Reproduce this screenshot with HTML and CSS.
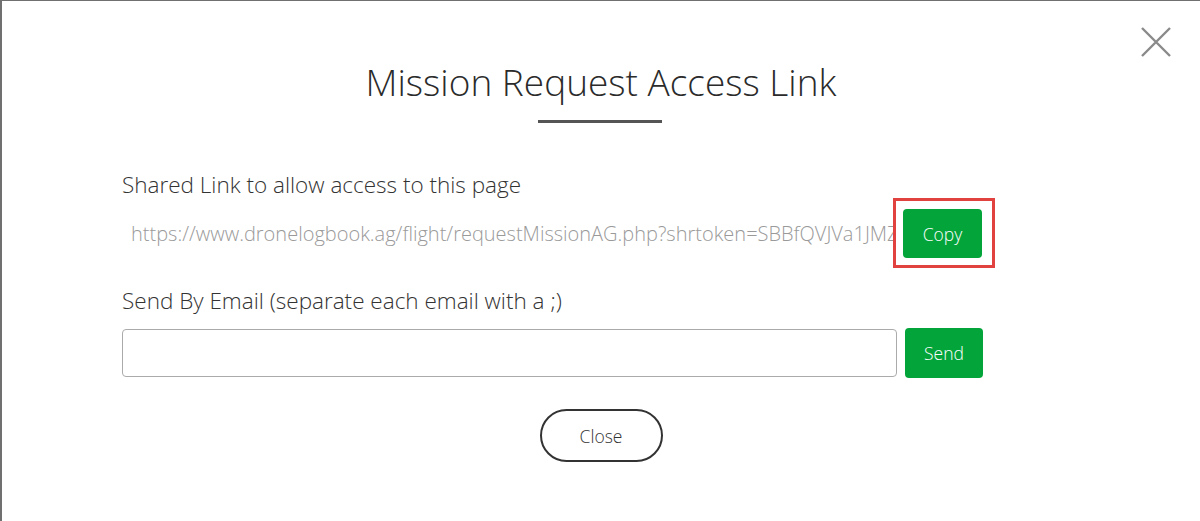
FILE: index.html
```html
<!DOCTYPE html>
<html>
<head>
<meta charset="utf-8">
<link rel="stylesheet" href="styles.css">
</head>
<body>
<div class="page">
  <div class="modal">
    <button class="dismiss" aria-label="Close">
      <svg width="32" height="32" viewBox="0 0 32 32"><path d="M2 2 L30 30 M30 2 L2 30" stroke="#8a8a8a" stroke-width="2.4" fill="none"/></svg>
    </button>
    <h1 class="title">Mission Request Access Link</h1>
    <div class="rule"></div>
    <div class="body">
      <div class="label">Shared Link to allow access to this page</div>
      <div class="row">
        <div class="link-field">https://www.dronelogbook.ag/flight/requestMissionAG.php?shrtoken=SBBfQVJVa1JMZkR0</div>
        <div class="copy-wrap">
          <button class="btn">Copy</button>
          <span class="highlight"></span>
        </div>
      </div>
      <div class="label label-email">Send By Email (separate each email with a ;)</div>
      <div class="row row-email">
        <input class="email" type="text">
        <button class="btn btn-send">Send</button>
      </div>
    </div>
    <div class="footer">
      <button class="close-btn">Close</button>
    </div>
  </div>
</div>
</body>
</html>
```
FILE: styles.css
```css
html, body {
  margin: 0;
  padding: 0;
  height: 100%;
  background: #fff;
}
body {
  font-family: "Open Sans", Lato, "Liberation Sans", sans-serif;
  font-weight: 300;
  color: #333;
}
.page {
  height: 100%;
  box-sizing: border-box;
  border-top: 1px solid #707070;
  border-left: 2px solid #707070;
}
.modal {
  position: relative;
  padding-top: 55px;
}
.dismiss {
  position: absolute;
  top: 25px;
  right: 28px;
  background: none;
  border: 0;
  padding: 0;
  width: 32px;
  height: 32px;
}
.dismiss svg { display: block; }
.title {
  margin: 0;
  text-align: center;
  font-weight: 300;
  font-size: 37px;
  line-height: 52px;
  color: #2b2b2b;
}
.rule {
  width: 124px;
  height: 3px;
  background: #555;
  margin: 12px auto 0;
  position: relative;
  left: -1px;
}
.body {
  padding-left: 120px;
  padding-top: 48px;
}
.label {
  font-size: 22.5px;
  line-height: 28px;
  color: #333;
}
.row {
  display: flex;
  align-items: center;
  gap: 8px;
  margin-top: 10px;
}
.link-field {
  width: 773px;
  box-sizing: border-box;
  padding: 0 9px;
  font-size: 20px;
  color: #9a9a9a;
  white-space: nowrap;
  overflow: hidden;
  height: 49px;
  line-height: 49px;
}
.copy-wrap {
  position: relative;
}
.btn {
  display: block;
  width: 79px;
  height: 49px;
  background: #03a53b;
  color: #fff;
  border: 0;
  border-radius: 4px;
  font-family: inherit;
  font-weight: 300;
  font-size: 17.5px;
  padding: 0;
}
.highlight {
  position: absolute;
  left: -10px;
  top: -11px;
  width: 96px;
  height: 64px;
  border: 3px solid #e2423f;
}
.label-email {
  margin-top: 29px;
}
.row-email {
  margin-top: 13px;
}
.email {
  width: 775px;
  height: 48px;
  box-sizing: border-box;
  border: 1px solid #ababab;
  border-radius: 4px;
  margin: 0;
}
.btn-send {
  height: 50px;
  width: 78px;
}
.footer {
  display: flex;
  justify-content: center;
  margin-top: 31px;
}
.close-btn {
  width: 123px;
  height: 53px;
  box-sizing: border-box;
  border: 2px solid #333;
  border-radius: 27px;
  background: #fff;
  font-family: inherit;
  font-weight: 300;
  font-size: 17.5px;
  color: #333;
}
```
